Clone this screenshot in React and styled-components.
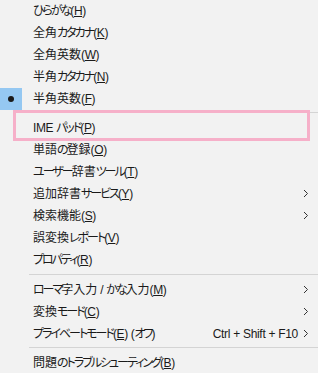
import React from "react";
import styled, { createGlobalStyle } from "styled-components";

const Global = createGlobalStyle`
  html, body { margin: 0; padding: 0; background: #f2f2f2; }
  body { width: 318px; height: 373px; overflow: hidden; }
`;

const Menu = styled.div`
  width: 318px;
  height: 373px;
  background: #f2f2f2;
  display: flex;
  flex-direction: column;
  margin-top: -1px;
  font-family: "Noto Sans CJK JP", "Noto Sans", sans-serif;
  font-size: 12px;
  font-feature-settings: "palt" 1;
  color: #1a1a1a;
`;

const Row = styled.div`
  position: relative;
  height: 22px;
  flex: 0 0 22px;
  display: grid;
  grid-template-columns: 22px 11px 1fr auto 20px;
  align-items: center;
  white-space: nowrap;
  &::after {
    content: "";
    display: ${(p) => (p.$marked ? "block" : "none")};
    position: absolute;
    left: 13px;
    top: -6px;
    width: 291px;
    height: 25px;
    border: 3px solid #f6b0c9;
  }
`;

const Check = styled.div`
  width: 22px;
  height: 22px;
  display: flex;
  align-items: center;
  justify-content: center;
  background: ${(p) => (p.$on ? "#95c8f2" : "transparent")};
`;

const Dot = styled.span`
  width: 6px;
  height: 6px;
  border-radius: 50%;
  background: #1a1a1a;
`;

const Label = styled.span`
  grid-column: 3;
  line-height: 22px;
  u { text-decoration: underline; text-underline-offset: 1px; }
`;

const Kana = styled.span`
  letter-spacing: -2px;
`;

const Latin = styled.span`
  font-family: "Liberation Sans", Arial, sans-serif;
  letter-spacing: -0.4px;
`;

const Shortcut = styled.span`
  grid-column: 4;
  font-family: "Liberation Sans", Arial, sans-serif;
  font-size: 12px;
  letter-spacing: -0.3px;
`;

const Arrow = styled.span`
  grid-column: 5;
  display: flex;
  justify-content: center;
  padding-right: 4px;
`;

const Sep = styled.div`
  flex: 0 0 ${(p) => p.$h}px;
  display: flex;
  align-items: center;
  padding-left: 29px;
  &::before {
    content: "";
    flex: 1;
    height: 1px;
    background: #d4d4d4;
  }
`;

const Chevron = () => (
  <svg width="6" height="9" viewBox="0 0 6 9">
    <path d="M1 1 L4.5 4.5 L1 8" fill="none" stroke="#333" strokeWidth="1" />
  </svg>
);

const renderText = (t) =>
  t.split(/([\u3040-\u30ff]+|[A-Za-z /()]+)/).filter(Boolean).map((s, i) =>
    /^[\u3040-\u30ff]+$/.test(s) ? (
      <Kana key={i}>{s}</Kana>
    ) : /^[A-Za-z /()]+$/.test(s) ? (
      <Latin key={i}>{s}</Latin>
    ) : (
      s
    )
  );

const Item = ({ text, mn, suffix = "", on, sub, shortcut, marked }) => (
  <Row $marked={marked}>
    <Check $on={on}>{on && <Dot />}</Check>
    <Label>
      {renderText(text)}
      <Latin>
        (<u>{mn}</u>)
      </Latin>
      {renderText(suffix)}
    </Label>
    {shortcut && <Shortcut>{shortcut}</Shortcut>}
    {sub && (
      <Arrow>
        <Chevron />
      </Arrow>
    )}
  </Row>
);

export default function App() {
  return (
    <>
      <Global />
      <Menu>
        <Item text="ひらがな" mn="H" />
        <Item text="全角カタカナ" mn="K" />
        <Item text="全角英数" mn="W" />
        <Item text="半角カタカナ" mn="N" />
        <Item text="半角英数" mn="F" on />
        <Sep $h={7} />
        <Item text="IME パッド" mn="P" marked />
        <Item text="単語の登録" mn="O" />
        <Item text="ユーザー辞書ツール" mn="T" />
        <Item text="追加辞書サービス" mn="Y" sub />
        <Item text="検索機能" mn="S" sub />
        <Item text="誤変換レポート" mn="V" />
        <Item text="プロパティ" mn="R" />
        <Sep $h={8} />
        <Item text="ローマ字入力 / かな入力" mn="M" sub />
        <Item text="変換モード" mn="C" sub />
        <Item text="プライベートモード" mn="E" suffix=" (オフ)" sub shortcut="Ctrl + Shift + F10" />
        <Sep $h={7} />
        <Item text="問題のトラブルシューティング" mn="B" />
      </Menu>
    </>
  );
}
